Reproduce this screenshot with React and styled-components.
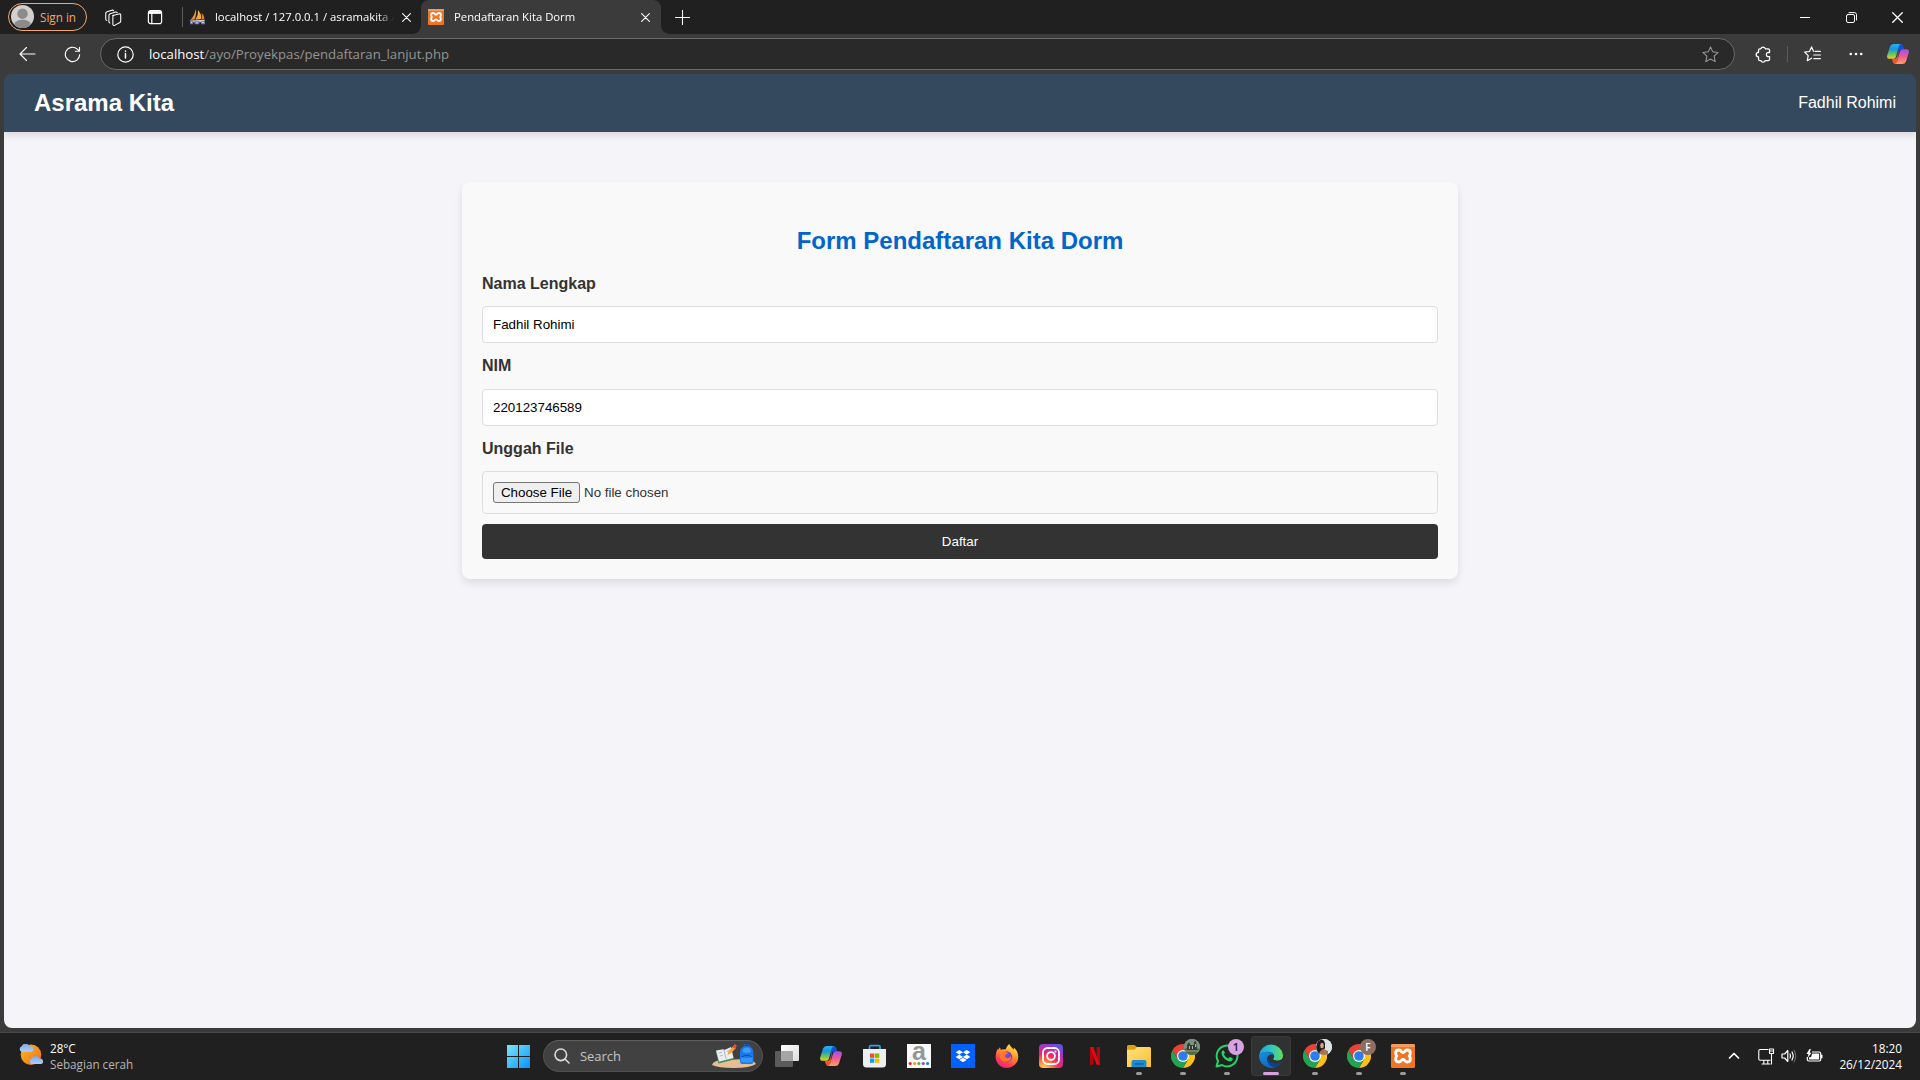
import React from "react";
import styled, { createGlobalStyle } from "styled-components";

const ui = `"Open Sans", "Noto Sans", sans-serif`;
const arial = `"Liberation Sans", Arial, sans-serif`;

const GlobalStyle = createGlobalStyle`
  *, *::before, *::after { box-sizing: border-box; }
  html, body { margin: 0; padding: 0; }
  body { width: 1920px; height: 1080px; overflow: hidden; background: #3b3b3b; }
  svg { display: block; flex: none; }
`;

const Screen = styled.div`
  display: flex;
  flex-direction: column;
  width: 1920px;
  height: 1080px;
  background: #3b3b3b;
  font-family: ${ui};
`;

const UiText = styled.span`
  flex: none;
  white-space: nowrap;
  font-size: ${(p) => p.$size || 11.3}px;
  line-height: 16px;
  color: ${(p) => p.$color || "#fff"};
`;

/* ---------- tab strip ---------- */
const TabStrip = styled.div`
  display: flex;
  align-items: center;
  flex: none;
  height: 34px;
  padding-left: 8px;
  background: #202020;
`;

const SignIn = styled.div`
  display: flex;
  align-items: center;
  width: 79px;
  height: 28px;
  margin-top: -1px;
  padding-left: 2px;
  gap: 6px;
  border: 1px solid #f5a66f;
  border-radius: 14px;
`;

const Slot = styled.div`
  display: flex;
  align-items: center;
  justify-content: center;
  flex: none;
  width: ${(p) => p.$w}px;
  height: ${(p) => p.$h || 34}px;
  padding-left: ${(p) => p.$indent || 0}px;
  color: ${(p) => p.$color || "#fff"};
`;

const StripDivider = styled.div`
  width: 1px;
  height: 20px;
  margin-left: 11px;
  background: #5c5c5c;
`;

const Tab = styled.div`
  position: relative;
  display: flex;
  align-items: center;
  flex: none;
  width: ${(p) => p.$w}px;
  height: 34px;
  padding-left: ${(p) => p.$pad}px;
  border-radius: 8px 8px 0 0;
  background: ${(p) => (p.$active ? "#3b3b3b" : "transparent")};
  &::before, &::after {
    content: "";
    display: ${(p) => (p.$active ? "block" : "none")};
    position: absolute;
    bottom: 0;
    width: 8px;
    height: 8px;
  }
  &::before { left: -8px; background: radial-gradient(circle at 0 0, transparent 7.5px, #3b3b3b 8px); }
  &::after { right: -8px; background: radial-gradient(circle at 100% 0, transparent 7.5px, #3b3b3b 8px); }
`;

const TabTitle = styled.div`
  display: flex;
  flex: none;
  width: ${(p) => p.$w}px;
  margin-left: ${(p) => p.$gap}px;
  mask-image: linear-gradient(to right, #000 calc(100% - 16px), transparent);
`;

const WindowControls = styled.div`
  display: flex;
  margin-left: auto;
`;

/* ---------- toolbar ---------- */
const Toolbar = styled.div`
  display: flex;
  align-items: center;
  flex: none;
  height: 40px;
  padding-left: 4px;
`;

const AddressBar = styled.div`
  display: flex;
  align-items: center;
  flex: none;
  width: 1635px;
  height: 32px;
  margin-left: 6px;
  padding: 0 15px 0 16px;
  border: 1px solid #6a6a6a;
  border-radius: 16px;
  background: #292929;
  color: #fff;
`;

const Url = styled.div`
  display: flex;
  flex: 1;
  margin-left: 15px;
`;

const ToolDivider = styled.div`
  flex: none;
  width: 1px;
  height: 16px;
  background: #5a5a5a;
`;

/* ---------- web page ---------- */
const Viewport = styled.div`
  flex: none;
  width: 1912px;
  height: 954px;
  margin-left: 4px;
  overflow: hidden;
  border-radius: 8px;
  background: linear-gradient(#34495e 30px, #f4f4f9 30px);
  font-family: ${arial};
  color: #333;
`;

const Header = styled.header`
  display: flex;
  align-items: center;
  justify-content: space-between;
  height: 58px;
  padding: 0 20px 0 30px;
  background: #34495e;
  box-shadow: 0 4px 6px rgba(0, 0, 0, 0.1);
  color: #fff;
  font-size: 16px;
`;

const Brand = styled.div`
  font-size: 24px;
  font-weight: bold;
`;

const FormCard = styled.form`
  display: flex;
  flex-direction: column;
  width: 996px;
  height: 397px;
  margin: 50px auto 0;
  padding: 20px;
  border-radius: 8px;
  background: #f9f9f9;
  box-shadow: 0 4px 8px rgba(0, 0, 0, 0.1);
`;

const Heading = styled.h2`
  margin: 25px 0 21px;
  height: 27px;
  font-size: 24px;
  line-height: 27px;
  text-align: center;
  color: #0066cc;
`;

const Field = styled.div`
  display: flex;
  flex-direction: column;
  height: ${(p) => p.$h}px;
`;

const Label = styled.label`
  height: 18px;
  margin-bottom: ${(p) => p.$gap || 13}px;
  font-size: 16px;
  line-height: 18px;
  font-weight: bold;
`;

const Input = styled.input`
  height: 37px;
  padding: 10px;
  border: 1px solid #ddd;
  border-radius: 4px;
  background: #fff;
  color: #000;
  font: 13.333px ${arial};
  outline: none;
`;

const FileInput = styled.div`
  display: flex;
  align-items: center;
  gap: 4px;
  height: 43px;
  padding: 0 10px;
  border: 1px solid #ddd;
  border-radius: 4px;
  font-size: 13.333px;
`;

const ChooseButton = styled.button`
  width: 87px;
  height: 21px;
  padding: 0;
  border: 1px solid #767676;
  border-radius: 3px;
  background: #efefef;
  color: #000;
  font: 13.333px ${arial};
`;

const Submit = styled.button`
  height: 35px;
  border: 0;
  border-radius: 4px;
  background: #333;
  color: #fff;
  font: 13.333px ${arial};
`;

/* ---------- taskbar ---------- */
const Taskbar = styled.div`
  display: flex;
  align-items: center;
  height: 48px;
  margin-top: auto;
  padding-bottom: 1px;
  border-top: 1px solid #484848;
  background: #202020;
`;

const Weather = styled.div`
  display: flex;
  align-items: center;
  width: 496px;
  height: 46px;
  padding-left: 17px;
  gap: 7px;
`;

const Lines = styled.div`
  display: flex;
  flex-direction: column;
`;

const Clock = styled.div`
  display: flex;
  flex-direction: column;
  align-items: flex-end;
  width: 72px;
`;

const Search = styled.div`
  display: flex;
  align-items: center;
  width: 220px;
  height: 32px;
  margin: 0 2px;
  padding: 0 5px 0 10px;
  border: 1px solid #505050;
  border-top-color: #606060;
  border-radius: 16px;
  background: #414141;
`;

const SearchArt = styled.div`
  margin-left: auto;
`;

const App44 = styled.div`
  position: relative;
  display: flex;
  align-items: center;
  justify-content: center;
  flex: none;
  width: 40px;
  height: 40px;
  margin: 0 2px;
  border-radius: 4px;
  background: ${(p) => (p.$active ? "#303232" : "transparent")};
  box-shadow: ${(p) => (p.$active ? "inset 0 0 0 1px #393b3b" : "none")};
  &::after {
    content: "";
    display: ${(p) => (p.$running ? "block" : "none")};
    position: absolute;
    bottom: 1px;
    left: ${(p) => (p.$active ? 12 : 17)}px;
    width: ${(p) => (p.$active ? 16 : 6)}px;
    height: 3px;
    border-radius: 2px;
    background: ${(p) => (p.$active ? "#d9a0e3" : "#9b9b9b")};
  }
`;

const Badge = styled.span`
  position: absolute;
  top: 3px;
  right: 3px;
  display: flex;
  align-items: center;
  justify-content: center;
  width: 16px;
  height: 16px;
  border-radius: 50%;
  overflow: hidden;
  background: ${(p) => p.$bg};
  color: ${(p) => p.$color || "#fff"};
  font-size: ${(p) => p.$size || 11}px;
  font-weight: 600;
  line-height: 16px;
`;

const Tray = styled.div`
  display: flex;
  align-items: center;
  margin-left: auto;
  padding-right: 18px;
`;

/* ---------- drawings ---------- */
const Line = ({ w = 16, h = w, box = "0 0 16 16", sw = 1, children, ...r }) => (
  <svg width={w} height={h} viewBox={box} fill="none" stroke="currentColor" strokeWidth={sw} strokeLinecap="round" strokeLinejoin="round" {...r}>
    {children}
  </svg>
);

const Avatar = () => (
  <svg width="23" height="23" viewBox="0 0 22 22">
    <defs><clipPath id="avatar"><circle cx="11" cy="11" r="11" /></clipPath></defs>
    <circle cx="11" cy="11" r="11" fill="#d2d0ce" />
    <g clipPath="url(#avatar)" fill="#8d8b89"><circle cx="11" cy="8.3" r="5" /><ellipse cx="11" cy="18.6" rx="8" ry="4.4" /></g>
  </svg>
);

const WorkspacesIcon = () => (
  <Line w={17}>
    <path d="M7.2 6.2 13 4.7q1.7-.4 1.8 1.1v5.5q0 1.200-1.200 1.700l-4.200 2.200q-1.900.8-2-.9V7.400q0-1 .8-1.300Z" />
    <path d="M4.700 13.200q-1-.1-1-1.300V6q0-1.200 1.200-1.600l5-1.500q1.200-.2 1.600.5M1.800 10.800Q.7 10.600.700 9.400V4.100q0-1.100 1.200-1.500l4.600-1.500q1.200-.2 1.600.5" />
  </Line>
);

const TabActionsIcon = () => (
  <Line w={16} sw={1.2}>
    <rect x="1.400" y="1.600" width="13.200" height="13" rx="2.200" />
    <path d="M1.800 3.500h12.500" strokeWidth="2.800" strokeLinecap="butt" />
    <path d="M4.800 4.500v10" />
  </Line>
);

const SailIcon = () => (
  <svg width="17" height="16" viewBox="0 0 17 16">
    <path d="M6.500 0Q8 5 5.600 10.500L1.500 11Q6 6 6.500 0Z" fill="#e8922a" />
    <path d="M9 1q4 4.500 3 9l-5.500.8Q9.500 6 9 1Z" fill="#f5a93c" />
    <path d="M12.600 4q3.200 3 2.600 6.300l-2.600.2q.8-3 0-6.500Z" fill="#d9852a" />
    <path d="M.5 11.500 16 10.800l-1.500 2.500H2Z" fill="#c9c7d8" />
    <path d="M1 12.300h3v3H1zM5.500 12.300h4.800v3H5.500zM12 12.300h4v3h-4z" fill="#7774a8" />
    <path d="M2 13.500h1M6.700 13.800h2.200M13 13.500h1.700" stroke="#dedcf0" />
  </svg>
);

const XamppIcon = ({ s = 16 }) => (
  <svg width={s} height={s} viewBox="0 0 24 24">
    <rect width="24" height="24" rx="1.500" fill="#ef7623" />
    <path d="M0 1.500Q0 0 1.500 0h21Q24 0 24 1.500V3H0Z" fill="#f39a5c" />
    <path d="M7.700 6Q9.700 6 10.400 7.600 12 9.400 13.600 7.600 14.300 6 16.300 6q3 0 3 3 0 2-1.100 3 1.100 1 1.100 3 0 3-3 3-2 0-2.700-1.600-1.600-1.800-3.200 0Q9.700 18 7.700 18q-3 0-3-3 0-2 1.100-3-1.100-1-1.100-3 0-3 3-3Z" fill="none" stroke="#fff" strokeWidth="2.800" strokeLinejoin="round" />
  </svg>
);

const CloseIcon = ({ s = 9 }) => <Line w={s} box="0 0 9 9" sw={1.1}><path d="m.6.6 7.800 7.800M8.400.6.6 8.400" /></Line>;
const PlusIcon = () => <Line w={15} box="0 0 15 15" sw={1.1}><path d="M7.500.5v14M.5 7.500h14" /></Line>;
const BackIcon = () => <Line w={17} h={16} box="0 0 17 16" sw={1.1}><path d="M16 8H1.200M7.500 1.500 1 8l6.500 6.500" /></Line>;
const ReloadIcon = () => <Line w={17} box="0 0 18 18" sw={1.2}><path d="M16.600 9a7.600 7.600 0 1 1-2.500-5.700L16.300 5.500M16.400 1.300v4.300h-4.400" /></Line>;
const InfoIcon = () => <Line w={17} box="0 0 17 17" sw={1.2}><circle cx="8.500" cy="8.500" r="7.700" /><path d="M8.500 7.600v4.400M8.500 5v.2" strokeWidth="1.500" /></Line>;
const starPath = "m8 .8 2.100 4.700 5.100.6-3.800 3.500 1 5.100L8 12.200l-4.400 2.500 1-5.100L.8 6.100l5.100-.6Z";
const StarIcon = () => <Line w={17}><path d={starPath} /></Line>;
const PuzzleIcon = () => (
  <Line w={17} sw={1.200}>
    <path d="M5.500 2.600a2.200 2.200 0 0 1 4.200 0h2.700q1.300 0 1.300 1.300v2.300q-3-.5-3 1.900t3 1.900v2.400q0 1.300-1.300 1.300H9.700a2.200 2.200 0 0 1-4.200 0H4.600q-1.300 0-1.300-1.300v-2.100a2.200 2.200 0 0 1 0-4.400V3.900q0-1.300 1.300-1.300Z" />
  </Line>
);
const FavoritesIcon = () => (
  <Line w={17} h={16} box="0 0 17 16" sw={1.200}>
    <path d="M9.500 5.300 7.600.9 5.500 5.500l-4.900.6 3.600 3.500-.9 5.100 4.300-2.500M11 5.400h5.400M9.800 9h6.600M9.800 12.600h6.600" />
  </Line>
);
const DotsIcon = () => <svg width="14" height="4" viewBox="0 0 14 4" fill="#fff"><circle cx="1.800" cy="2" r="1.300" /><circle cx="7" cy="2" r="1.300" /><circle cx="12.200" cy="2" r="1.300" /></svg>;

const CopilotIcon = ({ id, s = 22 }) => (
  <svg width={s} height={s * 20 / 22} viewBox="0 0 22 20">
    <defs>
      <linearGradient id={`${id}a`} x1="0" y1="0" x2="0" y2="1"><stop offset="0" stopColor="#29b2f6" /><stop offset=".35" stopColor="#1697dc" /><stop offset=".7" stopColor="#6fc35c" /><stop offset="1" stopColor="#f2cf1d" /></linearGradient>
      <linearGradient id={`${id}b`} x1="0" y1="0" x2="0" y2="1"><stop offset="0" stopColor="#9d50ee" /><stop offset=".5" stopColor="#ef5c95" /><stop offset="1" stopColor="#ffa350" /></linearGradient>
    </defs>
    <path d="M12 0h1.800q1.800 0 2.400 1.900l1 3.300h-2.700q-2 0-2.500 1.800L10 13.500Z" fill="#1c4fd0" />
    <path d="M10 20H8.200q-1.800 0-2.400-1.900l-1-3.300h2.700q2 0 2.500-1.800L12 6.500Z" fill="#f0582e" />
    <path d="M6.700 0H14q-1.500.3-2 2L8.900 12.800Q8.300 14.800 6.300 14.800H2.500Q-.5 14.800.2 11.500L3 2.600Q4 0 6.700 0Z" fill={`url(#${id}a)`} />
    <path d="M15.300 20H8q1.500-.3 2-2l3.100-10.800q.6-2 2.600-2h3.800q3 0 2.300 3.300L19 17.400Q18 20 15.300 20Z" fill={`url(#${id}b)`} />
  </svg>
);

const WeatherIcon = () => (
  <svg width="26" height="24" viewBox="0 0 26 24">
    <defs>
      <linearGradient id="sun" x1="0" y1="0" x2="1" y2="1"><stop offset="0" stopColor="#f8bd2e" /><stop offset="1" stopColor="#ef6a13" /></linearGradient>
      <linearGradient id="cloud" x1="0" y1="0" x2="0" y2="1"><stop offset="0" stopColor="#80a8ec" /><stop offset="1" stopColor="#b1cdf9" /></linearGradient>
    </defs>
    <circle cx="14" cy="10.800" r="10.300" fill="url(#sun)" />
    <path d="M4.500 7.800a3 3 0 0 1 .2-5.600 4.300 4.300 0 0 1 7.900.2 2.800 2.800 0 0 1 1.900 5.400Z" fill="url(#cloud)" />
    <path d="M14.500 20a2.900 2.900 0 0 1 .2-5.400 4.200 4.200 0 0 1 7.800.2 2.700 2.700 0 0 1 1.600 5.200Z" fill="url(#cloud)" />
  </svg>
);

const WindowsIcon = () => (
  <svg width="23" height="23" viewBox="0 0 23 23">
    <defs><linearGradient id="win" x1="0" y1="0" x2="23" y2="23" gradientUnits="userSpaceOnUse"><stop stopColor="#79e6fb" /><stop offset="1" stopColor="#0b92f8" /></linearGradient></defs>
    <path d="M0 0h11v11H0zM12 0h11v11H12zM0 12h11v11H0zM12 12h11v11H12z" fill="url(#win)" />
  </svg>
);

const SearchIcon = () => <Line w={16} sw={1.600}><circle cx="6.800" cy="6.800" r="5.800" /><path d="m11 11 4 4" /></Line>;

const SearchPicture = () => (
  <svg width="45" height="24" viewBox="0 0 45 24">
    <path d="M0 21q1-4 9-5l25-1q8 1 10 5-6 4-22 4T0 21Z" fill="#e5bf92" />
    <path d="M4 7.500 19 4l3 11.500L6.500 19.500Z" fill="#3b8b52" />
    <path d="m4 6.500 7-1.200 1.500.8L19 3l2.500 11L7 17.800Z" fill="#ececf1" />
    <path d="m12 6 2.300 9.500M7 9l3-.7M7.800 12l3-.7M14.500 7.500l3.500-1" stroke="#aaa9b7" strokeWidth=".8" />
    <path d="m15.500 11 1-4 5-5 2.500 2-5 5.200Z" fill="#f4a738" /><path d="m20.500 3 1.600-2.200q1-1 2 0t.2 2L22.600 5Z" fill="#ec4b3e" />
    <path d="M32 3Q32 0 34.800 0t2.800 3" fill="none" stroke="#1760ce" strokeWidth="1.200" />
    <path d="M28 9q0-7 6.700-7t6.700 7v8.500q0 2.500-2.500 2.500h-8.500q-2.400 0-2.400-2.500Z" fill="#1878ec" />
    <path d="M30.500 8q0-4.500 4.200-4.500T39 8q-4.200 2-8.500 0Z" fill="#3e9cfa" />
    <path d="M29 13q5.500 2 11.500 0v5q-5.500 1.600-11.500 0Z" fill="#3496ff" /><path d="M29.500 13q5.500-3.500 10.500 0" fill="none" stroke="#0d4cae" />
  </svg>
);

const TaskViewIcon = () => (
  <svg width="24" height="22" viewBox="0 0 24 22">
    <defs><linearGradient id="tv" x1="0" y1="0" x2="1" y2="1"><stop stopColor="#fff" /><stop offset="1" stopColor="#ddd" /></linearGradient></defs>
    <rect x="6" width="18" height="16" rx="1" fill="url(#tv)" /><rect y="6" width="18" height="16" rx="1" fill="#5b5b5b" /><path d="M6 6h12v10H6z" fill="#a5a5a5" />
  </svg>
);

const StoreIcon = () => (
  <svg width="24" height="24" viewBox="0 0 24 24">
    <path d="M6.500 6V2.800q0-1.100 1.100-1.100h8.300q1.100 0 1.100 1.100V6" fill="none" stroke="#2aa3e4" strokeWidth="1.700" />
    <path d="M0 5h23v15q0 3.500-3.500 3.500h-16Q0 23.500 0 20Z" fill="#efeff0" />
    <path d="M7 9.500h4.300v4.300H7z" fill="#f25022" /><path d="M12 9.500h4.300v4.300H12z" fill="#7fba00" /><path d="M7 14.500h4.300v4.300H7z" fill="#00a4ef" /><path d="M12 14.500h4.300v4.300H12z" fill="#ffb900" />
  </svg>
);

const Tile = styled.div`
  display: flex;
  flex-direction: column;
  align-items: center;
  width: 24px;
  height: 24px;
  background: #fafafa;
`;
const TileLetter = styled.span`
  height: 17px;
  font: bold 25px/15px ${arial};
  color: #969696;
`;
const LetterTile = () => (
  <Tile>
    <TileLetter>a</TileLetter>
    <svg width="24" height="5" viewBox="0 0 24 5">
      {["#ee2a34", "#f49b22", "#55b52b", "#8a4dc0", "#1d83df"].map((c, i) => <circle key={c} cx={3.2 + i * 4.35} cy="2.500" r="1.600" fill={c} />)}
    </svg>
  </Tile>
);

const DropboxIcon = () => (
  <svg width="24" height="24" viewBox="0 0 24 24">
    <rect width="24" height="24" fill="#0061fe" />
    <path d="m8.300 6 3.700 2.300-3.700 2.300-3.700-2.300ZM15.700 6l3.700 2.300-3.700 2.300L12 8.300ZM8.300 10.600l3.700 2.300-3.700 2.300-3.700-2.300ZM15.700 10.600l3.700 2.300-3.700 2.300-3.700-2.300ZM12 13.700l3.700 2.300-3.700 2.300L8.300 16Z" fill="#fff" />
  </svg>
);

const FirefoxIcon = () => (
  <svg width="24" height="24" viewBox="0 0 24 24">
    <defs>
      <linearGradient id="ff" x1=".8" y1="0" x2=".3" y2="1"><stop stopColor="#fff04a" /><stop offset=".4" stopColor="#ff9b27" /><stop offset=".75" stopColor="#ff4250" /><stop offset="1" stopColor="#e62182" /></linearGradient>
    </defs>
    <path d="M14.200 0q1 2.500 3.500 4.500l1 1 .5-1.800q4.300 4 4 9.500A11.300 10.800 0 0 1 .6 13Q.4 8.500 3 4.200L3.300 6 4.800 3.300l1 2.500q3-.8 4.700-.2Q11.500 2 14.200 0Z" fill="url(#ff)" />
    <circle cx="12" cy="12.500" r="5.300" fill="#7b43dc" />
    <path d="M5.500 9q1.500-2 4-1.500 1.500 1 3.600 1.200-.1 1.500-2.700 2-.7 2.500 1.400 3.300 3.200.8 4.200-2.500.8 5.500-4.700 6T5 12.500Z" fill="#ff7730" />
    <path d="M13.500 6.500q3.500.5 4.200 4.300" fill="none" stroke="#ffb32c" strokeWidth="1.800" />
  </svg>
);

const InstagramIcon = () => (
  <svg width="24" height="24" viewBox="0 0 24 24">
    <defs>
      <radialGradient id="ig" cx=".2" cy="1.050" r="1.150"><stop stopColor="#ffdc6b" /><stop offset=".3" stopColor="#ff7f3b" /><stop offset=".55" stopColor="#f0285f" /><stop offset=".8" stopColor="#b52ebd" /><stop offset="1" stopColor="#6352dd" /></radialGradient>
    </defs>
    <rect width="24" height="24" rx="4" fill="url(#ig)" />
    <rect x="4" y="4" width="16" height="16" rx="4.500" fill="none" stroke="#fff" strokeWidth="1.800" /><circle cx="12" cy="12" r="3.900" fill="none" stroke="#fff" strokeWidth="1.800" /><circle cx="16.400" cy="7.500" r="1.100" fill="#fff" />
  </svg>
);

const NetflixIcon = () => (
  <svg width="10" height="18" viewBox="0 0 10 18">
    <path d="M0 0h3.300v17.600L0 18ZM6.700 0H10v18l-3.300-.4Z" fill="#b20710" /><path d="M0 0h3.300L10 18l-3.500-.4Z" fill="#e50914" />
  </svg>
);

const FolderIcon = () => (
  <svg width="24" height="22" viewBox="0 0 24 22">
    <defs><linearGradient id="fold" x1="0" y1="0" x2="1" y2="1"><stop stopColor="#ffe082" /><stop offset="1" stopColor="#fcc02c" /></linearGradient></defs>
    <path d="M0 5V1.500Q0 0 1.500 0h6L10 2v4Z" fill="#dca00b" /><path d="M0 4.800h7.500L10 2h12.500Q24 2 24 3.500V22H0Z" fill="url(#fold)" />
    <path d="M4.500 22v-5q0-2 2-2h11q2 0 2 2v5Z" fill="#1c8bd5" /><path d="M8 19h8" stroke="#10619c" strokeWidth="1.500" strokeLinecap="round" />
  </svg>
);

const ChromeIcon = () => (
  <svg width="24" height="24" viewBox="0 0 24 24">
    <path d="M1.600 6A12 12 0 0 1 22.400 6H12Z" fill="#ea4335" />
    <path d="M22.400 6A12 12 0 0 1 12 24l5.200-9L12 6Z" fill="#fbc116" />
    <path d="M1.600 6A12 12 0 0 0 12 24l5.200-9H6.800Z" fill="#25a353" />
    <path d="M1.600 6 6.800 15 12 6Z" fill="#ea4335" />
    <circle cx="12" cy="12" r="6" fill="#fff" /><circle cx="12" cy="12" r="4.800" fill="#2d7cf0" />
  </svg>
);

const WhatsappIcon = () => (
  <svg width="24" height="24" viewBox="0 0 24 24">
    <path d="M1.500 22.500 3 17a10.400 10.400 0 1 1 4 4Z" fill="#1f2420" stroke="#25d366" strokeWidth="2" strokeLinejoin="round" />
    <path d="M8 6.300q-1.800.8-1.500 3 1 4.800 5.500 7.300 4 2.200 5.800-.8.300-1-.4-1.600l-2.200-1.100q-.7-.2-1 .3l-.9 1q-3-1.200-4.400-4l.8-1.100q.3-.4.100-.8L8.900 6.700q-.3-.6-.9-.4Z" fill="#25d366" />
  </svg>
);

const EdgeIcon = () => (
  <svg width="24" height="24" viewBox="0 0 24 24">
    <defs>
      <linearGradient id="ea" x1="0" y1=".3" x2="1" y2=".3"><stop stopColor="#269fdf" /><stop offset=".5" stopColor="#2fc5c8" /><stop offset="1" stopColor="#64dc55" /></linearGradient>
      <linearGradient id="eb" x1="0" y1="0" x2=".6" y2="1"><stop stopColor="#1994db" /><stop offset="1" stopColor="#1264bf" /></linearGradient>
    </defs>
    <path d="M.2 11A12 12 0 0 1 24 11q.3 5-5 5.500-5 .2-4.800-1.800 1.500-1.400.7-3.800Q13 7.600 8.300 7.800 2.500 8.300.2 11Z" fill="url(#ea)" />
    <path d="M.1 11Q3 7.400 8.200 7.700 13 8 14.300 11 11 9.400 9 12.200q-2 3.800.8 7.300 2.400 3 6 3.800A12 12 0 0 1 .1 11Z" fill="url(#eb)" />
    <path d="M9 12.500q-2 4 1 7.500t7 3.200q3.500-1.600 5.600-4.800-.4-.6-1.200-.1-4.400 2-8.600 0T9 12.500Z" fill="#0b4389" />
  </svg>
);

const CastlePhoto = () => (
  <svg width="16" height="16" viewBox="0 0 16 16"><path d="M0 0h16v16H0z" fill="#7e917e" /><path d="M0 10q8-3 16 0v6H0Z" fill="#506b40" /><path d="M3 11V6l2-3 1.500 3H10V3l2-1 1 9Z" fill="#323c36" /><path d="M5 7h1v3H5zM8 7h1v3H8zM11 5h1v3h-1z" fill="#aab3ad" /><path d="M0 12h16" stroke="#95a087" /></svg>
);
const PersonPhoto = () => (
  <svg width="16" height="16" viewBox="0 0 16 16"><path d="M0 0h16v16H0z" fill="#dce3e4" /><path d="M0 12Q0 0 5 0q5 1 4 9l-3 6H0Z" fill="#201c1c" /><ellipse cx="6" cy="6.500" rx="1.800" ry="2.800" fill="#d9a184" /><path d="M3 16q0-4 4-6l5 2v4Z" fill="#a67449" /></svg>
);

const ChevronIcon = () => <Line w={12} h={8} box="0 0 12 8" sw={1.700}><path d="m1.500 6 4.500-4.500L10.500 6" /></Line>;
const NetworkIcon = () => (
  <Line w={17} box="0 0 17 17" sw={1.100}><path d="M10 1.500H2Q.8 1.500.8 2.700V11q0 1.200 1.200 1.200h10M4 16h8M5.800 12.500V16M9.800 12.500V16M11.500 1h4v4.500h-4zM11.500 3h4M13.500 5.500V16" /></Line>
);
const VolumeIcon = () => (
  <Line w={16} sw={1.200}><path d="M1 6h2.600l3.200-3.500v11L3.600 10H1ZM9 6q1 2 0 4M11 4q2.300 4 0 8" /><path d="M13 2.300q3.500 5.700 0 11.400" stroke="#666" /></Line>
);
const BatteryIcon = () => (
  <svg width="17" height="14" viewBox="0 0 17 14"><path d="M6 3h7.300q1.400 0 1.400 1.400v6.200q0 1.400-1.400 1.400H2.700q-1.400 0-1.400-1.400V8" fill="none" stroke="#fff" strokeWidth="1.200" /><path d="M6.200 4.600h6.900v5.800H3V8.300h2Z" fill="#fff" /><path d="M15 5.800h1.500v3.500H15zM3.500 0 .5 5h2L1.500 9l4-5.200h-2L5 .2Z" fill="#fff" /></svg>
);

export default function App() {
  return (
    <Screen>
      <GlobalStyle />
      <TabStrip>
        <SignIn>
          <Avatar />
          <UiText $color="#f5a66f" $size={11.7}>Sign in</UiText>
        </SignIn>
        <Slot $w={52}><WorkspacesIcon /></Slot>
        <Slot $w={32}><TabActionsIcon /></Slot>
        <StripDivider />
        <Tab $w={238} $pad={2}>
          <Slot $w={24}><SailIcon /></Slot>
          <TabTitle $w={179} $gap={6}><UiText>localhost / 127.0.0.1 / asramakita /</UiText></TabTitle>
          <Slot $w={24}><CloseIcon /></Slot>
        </Tab>
        <Tab $w={240} $pad={7} $active>
          <XamppIcon />
          <TabTitle $w={170} $gap={10}><UiText>Pendaftaran Kita Dorm</UiText></TabTitle>
          <Slot $w={42}><CloseIcon /></Slot>
        </Tab>
        <Slot $w={43}><PlusIcon /></Slot>
        <WindowControls>
          <Slot $w={46}><Line w={10} box="0 0 10 10"><path d="M0 5.500h10" /></Line></Slot>
          <Slot $w={46}><Line w={11} box="0 0 11 11"><rect x=".5" y="2.500" width="8" height="8" rx="1.500" /><path d="M3 .6h5.500q2 0 2 2V8" /></Line></Slot>
          <Slot $w={46}><CloseIcon s={11} /></Slot>
        </WindowControls>
      </TabStrip>

      <Toolbar>
        <Slot $w={46}><BackIcon /></Slot>
        <Slot $w={44}><ReloadIcon /></Slot>
        <AddressBar>
          <InfoIcon />
          <Url>
            <UiText $size={13.2}>localhost</UiText>
            <UiText $size={13.2} $color="#949494">/ayo/Proyekpas/pendaftaran_lanjut.php</UiText>
          </Url>
          <Slot $w={17} $h={30} $color="#999"><StarIcon /></Slot>
        </AddressBar>
        <Slot $w={52} $h={40} $indent={5}><PuzzleIcon /></Slot>
        <ToolDivider />
        <Slot $w={49} $h={40}><FavoritesIcon /></Slot>
        <Slot $w={38} $h={40}><DotsIcon /></Slot>
        <Slot $w={45} $h={40} $indent={1}><CopilotIcon id="cpbar" /></Slot>
      </Toolbar>

      <Viewport>
        <Header>
          <Brand>Asrama Kita</Brand>
          <span>Fadhil Rohimi</span>
        </Header>
        <FormCard onSubmit={(e) => e.preventDefault()}>
          <Heading>Form Pendaftaran Kita Dorm</Heading>
          <Field $h={82}>
            <Label htmlFor="nama">Nama Lengkap</Label>
            <Input id="nama" defaultValue="Fadhil Rohimi" />
          </Field>
          <Field $h={83}>
            <Label $gap={14} htmlFor="nim">NIM</Label>
            <Input id="nim" defaultValue="220123746589" />
          </Field>
          <Field $h={84}>
            <Label>Unggah File</Label>
            <FileInput>
              <ChooseButton type="button">Choose File</ChooseButton>
              <span>No file chosen</span>
            </FileInput>
          </Field>
          <Submit>Daftar</Submit>
        </FormCard>
      </Viewport>

      <Taskbar>
        <Weather>
          <WeatherIcon />
          <Lines>
            <UiText $size={11.7}>28°C</UiText>
            <UiText $size={11.7} $color="#b5b5b5">Sebagian cerah</UiText>
          </Lines>
        </Weather>
        <Slot $w={45}><WindowsIcon /></Slot>
        <Search>
          <Slot $w={16} $h={30} $color="#ddd"><SearchIcon /></Slot>
          <Slot $w={57} $h={30} $indent={4}><UiText $size={13} $color="#c4c4c4">Search</UiText></Slot>
          <SearchArt><SearchPicture /></SearchArt>
        </Search>
        <App44><TaskViewIcon /></App44>
        <App44><CopilotIcon id="cptask" /></App44>
        <App44><StoreIcon /></App44>
        <App44><LetterTile /></App44>
        <App44><DropboxIcon /></App44>
        <App44><FirefoxIcon /></App44>
        <App44><InstagramIcon /></App44>
        <App44><NetflixIcon /></App44>
        <App44 $running><FolderIcon /></App44>
        <App44 $running><ChromeIcon /><Badge $bg="#7e917e"><CastlePhoto /></Badge></App44>
        <App44 $running><WhatsappIcon /><Badge $bg="#d9a0e3" $color="#222">1</Badge></App44>
        <App44 $running $active><EdgeIcon /></App44>
        <App44 $running><ChromeIcon /><Badge $bg="#dce3e4"><PersonPhoto /></Badge></App44>
        <App44 $running><ChromeIcon /><Badge $bg="#8d6e63" $size={10}>F</Badge></App44>
        <App44 $running><XamppIcon s={24} /></App44>
        <Tray>
          <Slot $w={36}><ChevronIcon /></Slot>
          <Slot $w={28}><NetworkIcon /></Slot>
          <Slot $w={18}><VolumeIcon /></Slot>
          <Slot $w={32}><BatteryIcon /></Slot>
          <Clock>
            <UiText $size={11.8}>18:20</UiText>
            <UiText $size={11.8}>26/12/2024</UiText>
          </Clock>
        </Tray>
      </Taskbar>
    </Screen>
  );
}
